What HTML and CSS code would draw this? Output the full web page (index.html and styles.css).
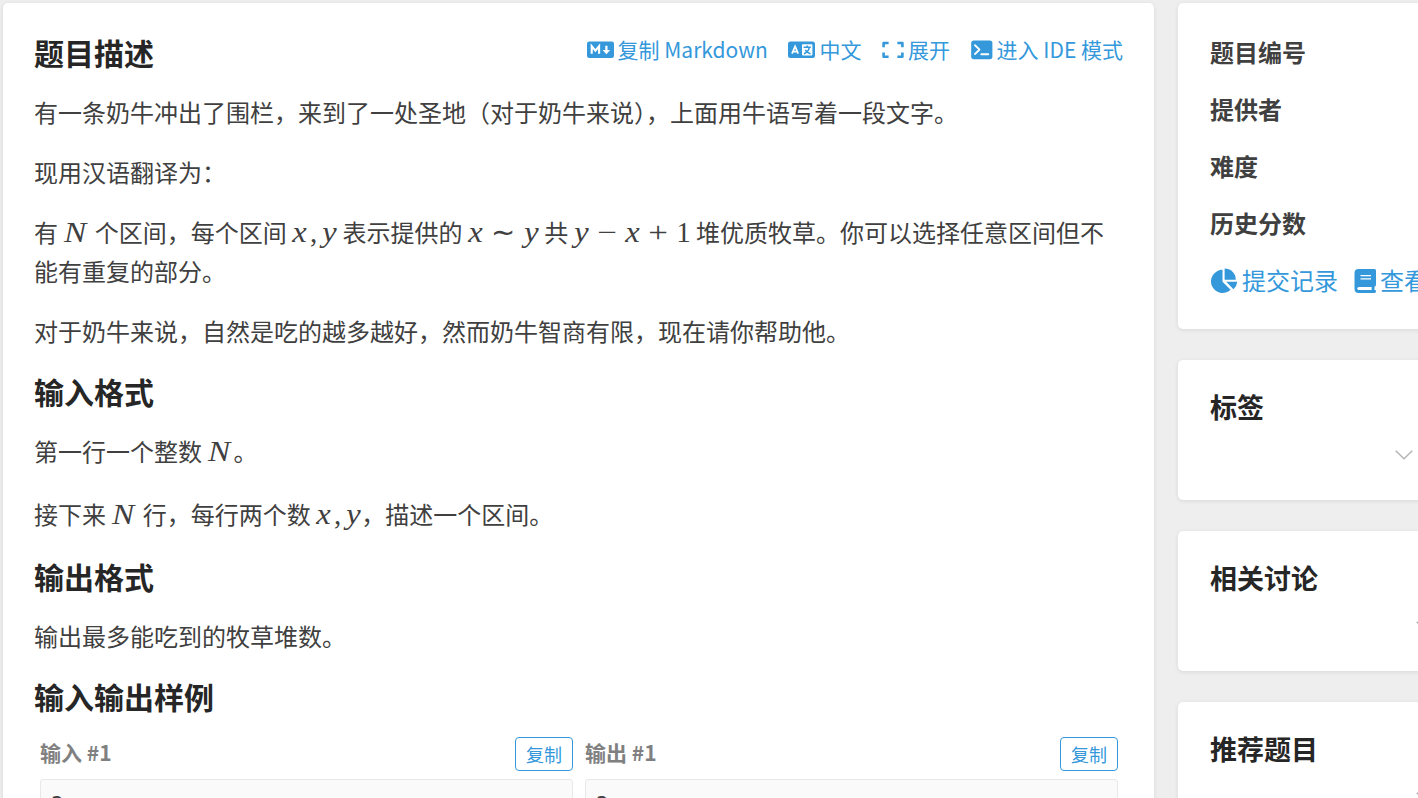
FILE: index.html
```html
<!doctype html>
<html lang="zh-CN">
  <head>
    <meta charset="UTF-8" />
    <meta name="viewport" content="width=device-width, initial-scale=1.0" />
    <title>题目描述</title>
    <link rel="stylesheet" href="styles.css">
  </head>
  <body>
    <main class="card problem">
      <div class="title-row">
        <h2>题目描述</h2>
        <div class="actions">
          <a class="md">
            <svg width="27" height="18" viewBox="0 0 27 18">
              <rect y="0.5" width="27" height="16.5" rx="2.2" fill="currentColor" />
              <path d="M4.7 12.8V5.2L8.4 9.6L12.1 5.2V12.8" fill="none" stroke="#fff" stroke-width="2.1" />
              <path d="M18.3 4.7H20.5V9H23.2L19.4 13.2L15.6 9H18.3Z" fill="#fff" />
            </svg>
            <span>复制 Markdown</span>
          </a>
          <a class="lang">
            <svg width="27" height="18" viewBox="0 0 27 18">
              <rect y="0.5" width="27" height="16.5" rx="2.5" fill="currentColor" />
              <path d="M4 12.7L7.1 5.5L10.2 12.7M5.1 10.6H9.1" fill="none" stroke="#fff" stroke-width="1.7" />
              <rect x="14" y="3.2" width="10.4" height="11.2" rx="0.8" fill="#fff" />
              <path d="M15.6 6.3H22.8M19.2 4.5V6.3M21.2 6.6C20.8 9.2 18.8 11.5 16 12.7M17.3 9C18.5 10.8 20 12 22.5 12.8" fill="none" stroke="currentColor" stroke-width="1.5" />
            </svg>
            <span>中文</span>
          </a>
          <a class="expand">
            <svg width="22" height="18" viewBox="0 0 22 18">
              <path d="M6.6 2H1.6V6.3M1.6 11.5V15.8H6.6M15.4 2H20.4V6.3M20.4 11.5V15.8H15.4" fill="none" stroke="currentColor" stroke-width="2.6" stroke-linejoin="round" />
            </svg>
            <span>展开</span>
          </a>
          <a class="ide">
            <svg width="22" height="20" viewBox="0 0 22 20">
              <rect x="0.2" y="0.6" width="21.2" height="18.6" rx="2.6" fill="currentColor" />
              <path d="M4 5.2L8.5 9.6L4 14M10.3 14.3H17.3" fill="none" stroke="#fff" stroke-width="1.9" stroke-linecap="round" stroke-linejoin="round" />
            </svg>
            <span>进入 IDE 模式</span>
          </a>
        </div>
      </div>

      <p>有一条奶牛冲出了围栏，来到了一处圣地（对于奶牛来说），上面用牛语写着一段文字。</p>
      <p>现用汉语翻译为：</p>
      <p>有 <span class="math n"><i>N</i></span> 个区间，每个区间 <span class="math xy"><i>x</i><b>,</b><i>y</i></span> 表示提供的 <span class="math sim"><i>x</i><b>∼</b><i>y</i></span> 共 <span class="math expr"><i>y</i><b class="op">−</b><i>x</i><b class="op">+</b><b>1</b></span> 堆优质牧草。你可以选择任意区间但不能有重复的部分。</p>
      <p>对于奶牛来说，自然是吃的越多越好，然而奶牛智商有限，现在请你帮助他。</p>

      <h2>输入格式</h2>
      <p>第一行一个整数 <span class="math n"><i>N</i></span>。</p>
      <p class="tall">接下来 <span class="math n"><i>N</i></span> 行，每行两个数 <span class="math xy"><i>x</i><b>,</b><i>y</i></span>，描述一个区间。</p>

      <h2>输出格式</h2>
      <p>输出最多能吃到的牧草堆数。</p>

      <h2>输入输出样例</h2>
      <div class="samples">
        <section>
          <div class="sample-head"><h5>输入 #1</h5><button>复制</button></div>
          <pre>3</pre>
        </section>
        <section>
          <div class="sample-head"><h5>输出 #1</h5><button>复制</button></div>
          <pre>2</pre>
        </section>
      </div>
    </main>

    <aside>
      <div class="card info">
        <div class="field">题目编号</div>
        <div class="field">提供者</div>
        <div class="field">难度</div>
        <div class="field">历史分数</div>
        <div class="links">
          <a>
            <svg width="28" height="26" viewBox="-1.3 0 28 26">
              <path d="M11.2 1.8V13.7L19.3 21.8A11.6 11.6 0 1 1 11.2 1.8Z" fill="currentColor" />
              <path d="M13.3 0.5A11.2 11.2 0 0 1 24.5 11.7H13.3Z" fill="currentColor" />
              <path d="M14.9 13.8H26A12 12 0 0 1 22.2 21.3Z" fill="currentColor" />
            </svg>
            <span>提交记录</span>
          </a>
          <a>
            <svg width="22" height="26" viewBox="0 0 22 26">
              <path d="M4.7 1H20.5Q22 1 22 2.5V16.8Q22 18.2 20.5 18.7V22H21Q22 22 22 23.4T20.5 25H4.7Q0.5 25 0.5 20.5V5.2Q0.5 1 4.7 1Z" fill="currentColor" />
              <path d="M6.5 7.6H17M6.5 10.8H17" stroke="#fff" stroke-width="1.3" />
              <path d="M4.8 19H17.6V22H4.8Q3.3 22 3.3 20.5T4.8 19Z" fill="#fff" />
            </svg>
            <span>查看题解</span>
          </a>
        </div>
      </div>
      <div class="card box">
        <h3>标签</h3>
        <svg class="arrow" width="18" height="10" viewBox="0 0 18 10"><path d="M0.7 0.7L9 8.7L17.3 0.7" /></svg>
      </div>
      <div class="card box wide">
        <h3>相关讨论</h3>
        <svg class="arrow" width="18" height="10" viewBox="0 0 18 10"><path d="M0.7 0.7L9 8.7L17.3 0.7" /></svg>
      </div>
      <div class="card box wide">
        <h3>推荐题目</h3>
        <svg class="arrow" width="18" height="10" viewBox="0 0 18 10"><path d="M0.7 0.7L9 8.7L17.3 0.7" /></svg>
      </div>
    </aside>
  </body>
</html>
```
FILE: styles.css
```css
* {
  box-sizing: border-box;
}

body {
  display: flex;
  align-items: flex-start;
  gap: 24px;
  height: 798px;
  margin: 0;
  padding: 3px 0 0 3px;
  overflow: hidden;
  background: #eee;
  color: #404040;
  font: 24px/39px "Noto Sans CJK SC", sans-serif;
}

h2,
h3,
h5,
p,
pre {
  margin: 0;
}

.card {
  background: #fff;
  border-radius: 5px;
  box-shadow: 0 1px 4px rgba(26, 26, 26, 0.1);
}

.problem {
  flex: none;
  width: 1151px;
  height: 900px;
  padding: 30px 31px;
}

.title-row {
  display: flex;
  justify-content: space-between;
  height: 39px;
}

h2,
h3 {
  color: #262626;
  font-size: 30px;
  font-weight: bold;
  line-height: 39px;
}

.problem p + h2 {
  margin-top: 22px;
}

.title-row + p,
h2 + p {
  margin-top: 20px;
}

p + p {
  margin-top: 21px;
}

p.tall {
  padding: 3px 0 2px;
}

a {
  display: flex;
  align-items: center;
  gap: 4px;
  color: #3498db;
  white-space: nowrap;
}

svg {
  flex: none;
}

a svg {
  margin-top: 2px;
}

.actions {
  display: flex;
  height: 32px;
  font-size: 21px;
  line-height: 32px;
}

.actions a {
  margin-left: 20.6px;
}

/* formulas */
.math {
  display: inline-flex;
  justify-content: space-between;
  height: 30px;
  font: 29px/32px "Liberation Serif", serif;
}

.math i,
.math b {
  display: block;
  font-weight: normal;
  text-align: center;
}

.math i {
  width: 15px;
  transform: scaleX(1.12);
}

.math.n {
  width: 26px;
  padding-left: 1px;
}

.math.n i {
  width: 22px;
  transform: scaleX(1.15);
}

.math .op {
  width: 18px;
  transform: scaleX(1.2);
}

.xy {
  width: 45px;
}

.xy b {
  margin-left: -2px;
}

.sim {
  width: 71px;
}

.expr {
  width: 117px;
}

/* samples */
.samples {
  display: grid;
  grid-template-columns: 533px 533px;
  gap: 12px;
  margin: 21px 0 0 6px;
}

.sample-head {
  display: flex;
  justify-content: space-between;
  align-items: flex-start;
  height: 42px;
}

h5 {
  color: #808080;
  font-size: 21px;
  line-height: 31px;
}

button {
  width: 58px;
  height: 34px;
  padding: 0;
  border: 1px solid #3498db;
  border-radius: 4px;
  background: #fff;
  color: #3498db;
  font: 18px/30px "Noto Sans CJK SC", sans-serif;
}

pre {
  height: 170px;
  padding: 9px 10px;
  border: 1px solid #e8e8e8;
  border-radius: 3px;
  background: #fafafa;
  font: 21px/32px "DejaVu Sans Mono", monospace;
}

/* sidebar */
aside {
  flex: none;
  width: 460px;
}

.info {
  height: 326px;
  padding: 20px 32px;
}

.field {
  height: 57px;
  font-weight: bold;
  line-height: 57px;
}

.links {
  display: flex;
  gap: 16px;
  height: 57px;
}

.box {
  width: 460px;
  height: 140px;
  margin-top: 31px;
  padding: 27px 32px;
}

.box h3 {
  font-size: 27px;
}

.arrow {
  display: block;
  margin: 24px 0 0 185px;
  fill: none;
  stroke: #b5b5b5;
  stroke-width: 1.5;
}

.wide .arrow {
  margin-left: 206px;
}
```
